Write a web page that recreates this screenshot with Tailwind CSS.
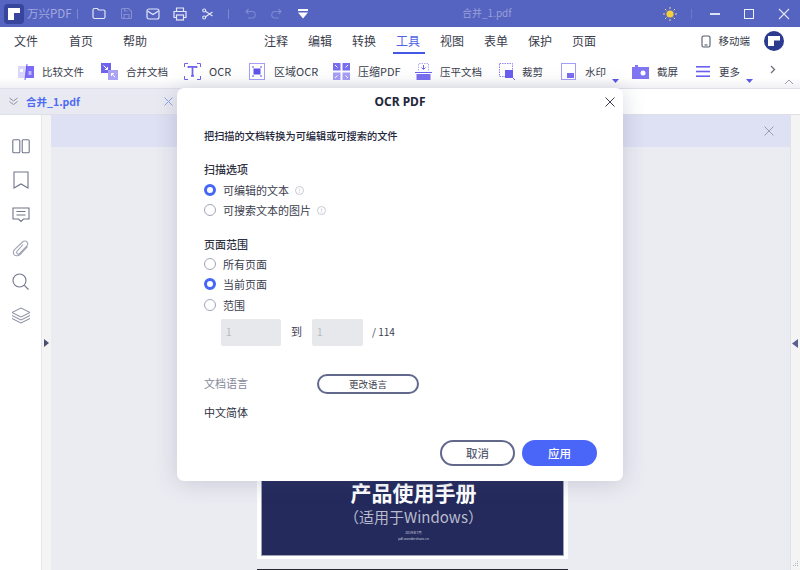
<!DOCTYPE html>
<html lang="zh-CN">
  <head>
    <meta charset="UTF-8" />
    <title>万兴PDF</title>
    <script src="https://cdn.jsdelivr.net/npm/@tailwindcss/browser@4"></script>
  </head>
  <body class="bg-white">
    <div class="relative w-[800px] h-[570px] overflow-hidden flex flex-col bg-white font-['Noto_Sans_CJK_SC','Noto_Sans',sans-serif] text-[#3a3d4d]">

      <!-- Title bar -->
      <div class="h-[27px] shrink-0 bg-[#5563c1] flex items-center relative text-[#a3aade]">
        <div class="ml-[4px] w-[20px] h-[20px] rounded-[4px] bg-[#38459c] flex items-center justify-center">
          <svg width="14" height="14" viewBox="0 0 14 14"><path d="M1 1h12v5H7v7H1z" fill="#fff"/></svg>
        </div>
        <span class="ml-[3px] w-[46px] text-[11.500px] leading-none whitespace-nowrap">万兴PDF</span>
        <div class="ml-[4px] w-px h-[10px] bg-[#7d88cf]"></div>
        <svg class="ml-[14px]" width="14" height="13" viewBox="0 0 14 13" fill="none" stroke="#e4e7f7" stroke-width="1.2"><path d="M1 3a1.500 1.500 0 0 1 1.500-1.500h2.800l1.500 1.500h4.700a1.500 1.500 0 0 1 1.500 1.500v5.500a1.500 1.500 0 0 1-1.500 1.500h-9A1.500 1.500 0 0 1 1 10z"/></svg>
        <svg class="ml-[14px]" width="13" height="13" viewBox="0 0 13 13" fill="none" stroke="#8791d2" stroke-width="1.1"><path d="M1.500 2.500a1 1 0 0 1 1-1h6l3 3v6a1 1 0 0 1-1 1h-8a1 1 0 0 1-1-1zM4 11.500v-4h5v4M4.500 1.500v2.500h3"/></svg>
        <svg class="ml-[13px]" width="14" height="12" viewBox="0 0 14 12" fill="none" stroke="#e4e7f7" stroke-width="1.2"><rect x="1" y="1" width="12" height="10" rx="2"/><path d="M1.500 3l5.500 3.500L12.500 3"/></svg>
        <svg class="ml-[13px]" width="14" height="14" viewBox="0 0 14 14" fill="none" stroke="#e4e7f7" stroke-width="1.2"><path d="M3.500 4.500V1h7v3.500M3.500 10.500H1V4.500h12v6h-2.500"/><rect x="3.500" y="8" width="7" height="5"/></svg>
        <svg class="ml-[15px]" width="11" height="12" viewBox="0 0 11 12" fill="none" stroke="#e4e7f7" stroke-width="1.1"><circle cx="2.200" cy="2.500" r="1.500"/><circle cx="2.200" cy="9.500" r="1.500"/><path d="M3.500 3.300L10.500 8M3.500 8.700L10.500 4"/></svg>
        <div class="ml-[15px] w-px h-[10px] bg-[#7d88cf]"></div>
        <svg class="ml-[16px]" width="11" height="11" viewBox="0 0 11 11" fill="none" stroke="#7f8ad0" stroke-width="1.1"><path d="M3.500 1L1 3.500 3.500 6M1 3.500h6a3 3 0 0 1 0 6.500H3"/></svg>
        <svg class="ml-[15px]" width="11" height="11" viewBox="0 0 11 11" fill="none" stroke="#7f8ad0" stroke-width="1.100"><path d="M7.500 1L10 3.500 7.500 6M10 3.500H4a3 3 0 0 0 0 6.500h4"/></svg>
        <svg class="ml-[16px]" width="10" height="10" viewBox="0 0 10 10" fill="#fff"><rect y="0" width="10" height="2"/><path d="M0 3.500h10L5 9.500z"/></svg>
        <span class="absolute left-[462px] top-[5px] text-[10px] leading-[15px] text-[#98a0d8]">合并_1.pdf</span>
        <div class="ml-auto flex items-center">
          <svg width="14" height="14" viewBox="0 0 14 14"><circle cx="7" cy="7" r="3.600" fill="#f6cf3f"/><g stroke="#f0d88a" stroke-width="1"><path d="M7 0v2M7 12v2M0 7h2M12 7h2M2 2l1.400 1.400M10.600 10.600L12 12M2 12l1.400-1.400M10.600 3.400L12 2"/></g></svg>
          <div class="ml-[14px] w-px h-[10px] bg-[#6e79c6]"></div>
          <div class="ml-[18px] w-[10px] h-[2px] bg-[#dfe2f5]"></div>
          <div class="ml-[24px] w-[10px] h-[10px] border border-[#eef0fa]"></div>
          <svg class="ml-[24px] mr-[10px]" width="12" height="12" viewBox="0 0 12 12" stroke="#e4e7f7" stroke-width="1.1"><path d="M1 1l10 10M11 1L1 11"/></svg>
        </div>
      </div>

      <!-- Menu row -->
      <div class="h-[28px] shrink-0 flex items-center text-[12px] relative">
        <span class="ml-[14px] w-[55px]">文件</span>
        <span class="w-[54px]">首页</span>
        <span class="w-[141px]">帮助</span>
        <div class="flex gap-[20px]">
          <span>注释</span><span>编辑</span><span>转换</span>
          <span class="relative text-[#4e63e8]">工具<span class="absolute left-[-3px] right-[-5px] bottom-[-4px] h-[2px] bg-[#4359e6]"></span></span>
          <span>视图</span><span>表单</span><span>保护</span><span>页面</span>
        </div>
        <div class="ml-auto flex items-center">
          <svg width="10" height="13" viewBox="0 0 10 13" fill="none" stroke="#555a6b" stroke-width="1.100"><rect x="1" y="1" width="8" height="11" rx="1.500"/><path d="M3.500 10h3"/></svg>
          <span class="ml-[8px] text-[10.500px]">移动端</span>
          <div class="ml-[14px] mr-[16px] w-[20px] h-[20px] rounded-full bg-[#2c3a8f] flex items-center justify-center">
            <svg width="12" height="12" viewBox="0 0 12 12"><path d="M0 1h12v4.500H6V11H0z" fill="#fff"/></svg>
          </div>
        </div>
      </div>

      <!-- Tool row -->
      <div class="h-[33px] shrink-0 flex items-center pl-[17px] text-[10.500px] bg-gradient-to-b from-white from-70% to-[#f1f1f5] relative">
        <div class="w-[84px] flex items-center gap-[7px]">
          <svg width="18" height="18" viewBox="0 0 18 18"><rect x="1" y="3" width="8" height="12" fill="#d9d5fb"/><rect x="9" y="3" width="8" height="12" fill="#7c6cf5"/><path d="M10 1L8 17" stroke="#6a58ef" stroke-width="1"/><rect x="3" y="6" width="3" height="3" fill="#fff"/><path d="M11.500 9h3M11.500 11h3" stroke="#fff"/></svg>
          <span>比较文件</span>
        </div>
        <div class="w-[83px] flex items-center gap-[8px]">
          <svg width="17" height="17" viewBox="0 0 17 17"><rect x="0" y="0" width="10" height="10" fill="#6f63ee"/><rect x="7" y="7" width="10" height="10" fill="#a9a2f6"/><path d="M2.500 2.500l4 4M6.500 4v2.500H4" stroke="#fff" fill="none"/><path d="M14 14l-3.500-3.500M10.500 13v-2.500H13" stroke="#fff" fill="none"/></svg>
          <span>合并文档</span>
        </div>
        <div class="w-[65px] flex items-center gap-[8px]">
          <svg width="17" height="17" viewBox="0 0 17 17" fill="none" stroke="#6e62f0" stroke-width="1"><path d="M0.500 4V0.500H4M13 0.500h3.500V4M16.500 13v3.500H13M4 16.500H0.500V13"/><path d="M4.500 5V3.800h8V5M8.500 3.800v9M7 12.800h3" stroke-width="1.700"/></svg>
          <span class="text-[11px]">OCR</span>
        </div>
        <div class="w-[84px] flex items-center gap-[9px]">
          <svg width="16" height="17" viewBox="0 0 16 17" fill="none"><rect x="0.500" y="0.500" width="15" height="16" stroke="#a59ef6"/><rect x="4.500" y="5.500" width="7" height="6" fill="#5f53ea"/><path d="M3 4h2M11 4h2M3 13h2M11 13h2" stroke="#5f53ea"/></svg>
          <span class="text-[11px]">区域OCR</span>
        </div>
        <div class="w-[82px] flex items-center gap-[8px]">
          <svg width="17" height="17" viewBox="0 0 17 17"><rect width="7.500" height="7.500" fill="#7a6ef0"/><rect x="9.500" width="7.500" height="7.500" fill="#7a6ef0"/><rect y="9.500" width="7.500" height="7.500" fill="#a69ff6"/><rect x="9.500" y="9.500" width="7.500" height="7.500" fill="#a69ff6"/><path d="M2 2l2.500 2.500M15 2l-2.500 2.500M2 15l2.500-2.500M15 15l-2.500-2.500" stroke="#fff"/></svg>
          <span class="text-[11px]">压缩PDF</span>
        </div>
        <div class="w-[84px] flex items-center gap-[8px]">
          <svg width="17" height="17" viewBox="0 0 17 17" fill="none"><path d="M3.500 7.500V0.500h10v7" stroke="#b1acf5" stroke-dasharray="1.500 1"/><path d="M8.500 2v4M6.500 4.500l2 2 2-2" stroke="#6e62f0"/><path d="M0 9.500h17" stroke="#6e62f0"/><rect x="1.500" y="11" width="14" height="6" fill="#7a6ef0"/></svg>
          <span>压平文档</span>
        </div>
        <div class="w-[62px] flex items-center gap-[7px]">
          <svg width="16" height="17" viewBox="0 0 16 17" fill="none"><rect x="0.500" y="0.500" width="13" height="13" stroke="#8d83f3" stroke-dasharray="1.500 1"/><rect x="6" y="7" width="8" height="8" fill="#6a5eef"/><path d="M14 15l2 2" stroke="#6a5eef"/></svg>
          <span>裁剪</span>
        </div>
        <div class="w-[71px] flex items-center gap-[6px] relative">
          <svg width="18" height="18" viewBox="0 0 18 18" fill="none"><rect x="0.500" y="0.500" width="14" height="16" stroke="#a59ef6"/><rect x="6" y="10" width="7" height="5" fill="#7a6ef0"/></svg>
          <span>水印</span>
          <svg class="absolute left-[51px] top-[16px]" width="7" height="5" viewBox="0 0 7 5"><path d="M0 0h7L3.500 4z" fill="#5d58e6"/></svg>
        </div>
        <div class="w-[64px] flex items-center gap-[8px]">
          <svg width="17" height="16" viewBox="0 0 17 16"><path d="M0 3h3V1h3v2h11v12H0z" fill="#8176f2"/><circle cx="11" cy="9" r="2.500" fill="#fff"/></svg>
          <span>截屏</span>
        </div>
        <div class="flex items-center gap-[9px] relative">
          <svg width="14" height="11" viewBox="0 0 14 11" fill="#6b5ff0"><rect width="14" height="1.600"/><rect y="4.700" width="14" height="1.600"/><rect y="9.400" width="14" height="1.600"/></svg>
          <span>更多</span>
          <svg class="absolute left-[50px] top-[15px]" width="7" height="5" viewBox="0 0 7 5"><path d="M0 0h7L3.500 4z" fill="#5d58e6"/></svg>
        </div>
        <svg class="absolute left-[770px] top-[10px]" width="6" height="9" viewBox="0 0 6 9" fill="none" stroke="#6b6e7c" stroke-width="1.300"><path d="M1 1l3.500 3.500L1 8"/></svg>
        <svg class="absolute left-[784px] top-[24px]" width="10" height="6" viewBox="0 0 10 6" fill="none" stroke="#9a9cab"><path d="M1 5l4-4 4 4"/></svg>
      </div>

      <!-- Tab row -->
      <div class="h-[27px] shrink-0 flex border-t border-b border-[#dedfe8]">
        <div class="w-[180px] bg-[#e9eaf1] flex items-center">
          <svg class="ml-[9px]" width="9" height="9" viewBox="0 0 9 9" fill="none" stroke="#8e90a3"><path d="M0.500 1l4 3 4-3M0.500 4.500l4 3 4-3"/></svg>
          <span class="ml-[8px] w-[138px] text-[10.500px] font-bold text-[#4e6bf4]">合并_1.pdf</span>
          <svg width="9" height="9" viewBox="0 0 9 9" stroke="#8fa0ee"><path d="M0.500 0.500l8 8M8.500 0.500l-8 8"/></svg>
        </div>
        <div class="flex-1 bg-white"></div>
      </div>

      <!-- Work area -->
      <div class="flex-1 min-h-0 flex">
        <div class="w-[41px] shrink-0 bg-white flex flex-col items-center pt-[24px]">
          <svg width="18" height="15" viewBox="0 0 18 15" fill="none" stroke="#71758c" stroke-width="1.100"><rect x="0.800" y="0.800" width="7" height="13" rx="1"/><rect x="10.200" y="0.800" width="7" height="13" rx="1"/></svg>
          <svg class="mt-[17px]" width="16" height="18" viewBox="0 0 16 18" fill="none" stroke="#71758c" stroke-width="1.100"><path d="M1 1h14v16l-7-4-7 4z"/></svg>
          <svg class="mt-[18px]" width="18" height="16" viewBox="0 0 18 16" fill="none" stroke="#71758c" stroke-width="1.100"><path d="M1 1h16v11h-5.500L9 14.500 6.500 12H1zM4.500 4.500h9M4.500 8h9"/></svg>
          <svg class="mt-[17px]" width="18" height="17" viewBox="0 0 18 17" fill="none" stroke="#a1a4b5" stroke-width="1.100"><path d="M15.500 6.500l-7.500 8c-2 2-6 1.500-6.500-1-.4-1.500 0-2.700 1-3.800L10.500 2c1.500-1.500 3.500-1.300 4.500-.2 1 1.200 1 2.800-.3 4.200l-7 7.300c-1 1-2.300.8-2.800 0-.5-.7-.3-1.700.5-2.500L11 4.500"/></svg>
          <svg class="mt-[16px]" width="17" height="17" viewBox="0 0 17 17" fill="none" stroke="#71758c" stroke-width="1.100"><circle cx="7.500" cy="7.500" r="6.500"/><path d="M12.300 12.300L16.500 16.500"/></svg>
          <svg class="mt-[17px]" width="20" height="17" viewBox="0 0 20 17" fill="none" stroke="#81859a" stroke-width="1"><path d="M10 1l9 4.500-9 4.500-9-4.500zM1 8.500l9 4.500 9-4.500M1 11.500L10 16l9-4.500"/></svg>
        </div>
        <div class="w-[10px] shrink-0 bg-[#f4f4f5] border-l border-[#e6e6ea] relative">
          <svg class="absolute left-[2px] top-[224px]" width="5" height="8" viewBox="0 0 5 8"><path d="M0 0l5 4-5 4z" fill="#4c5070"/></svg>
        </div>
        <div class="flex-1 min-w-0 bg-[#ebecf2] flex flex-col">
          <div class="h-[32px] shrink-0 bg-[#dee0f3] flex items-center justify-end pr-[16px]">
            <svg width="10" height="10" viewBox="0 0 10 10" stroke="#9a9cb0"><path d="M0.500 0.500l9 9M9.500 0.500l-9 9"/></svg>
          </div>
          <!-- PDF pages, the first is cut off behind the dialog -->
          <div class="flex-1 min-h-0 overflow-hidden flex flex-col items-center justify-end">
            <div class="ml-[-17px] w-[311px] h-[300px] shrink-0 bg-white px-[4px] pb-[3px] flex flex-col">
              <div class="flex-1 bg-[#242a5c] border border-[#9fa3b8] flex flex-col items-center justify-end pl-[3px] pb-[13px] text-white">
                <span class="text-[21px] leading-[27px] font-bold">产品使用手册</span>
                <span class="text-[15px] leading-[22px] text-[#b9bccd]">（适用于Windows）</span>
                <span class="mt-[2px] text-[3.500px] leading-[6px] text-[#c5c8d8]">2019年7月</span>
                <span class="text-[3.500px] leading-[6px] text-[#c5c8d8] font-['Liberation_Sans',sans-serif]">pdf.wondershare.cn</span>
              </div>
            </div>
            <div class="ml-[-17px] mt-[10px] w-[311px] h-px shrink-0 bg-[#26262e]"></div>
          </div>
        </div>
        <div class="w-[10px] shrink-0 bg-[#f4f4f5] border-l border-[#e0e0e5] relative">
          <svg class="absolute left-[1px] top-[224px]" width="6" height="9" viewBox="0 0 6 9"><path d="M6 0L0 4.500 6 9z" fill="#5a6091"/></svg>
          <svg class="absolute left-[1px] bottom-[2px]" width="7" height="7" viewBox="0 0 7 7" fill="#b4b5bf"><rect x="5" y="0" width="1" height="1"/><rect x="3" y="2" width="1" height="1"/><rect x="5" y="2" width="1" height="1"/><rect x="1" y="4" width="1" height="1"/><rect x="3" y="4" width="1" height="1"/><rect x="5" y="4" width="1" height="1"/></svg>
        </div>
      </div>

      <!-- OCR dialog -->
      <div class="absolute left-[177px] top-[88px] w-[446px] h-[393px] bg-white rounded-[7px] shadow-[0_2px_22px_rgba(70,76,120,0.22)] pl-[27px] text-[11px] leading-[16px]">
        <div class="relative ml-[-27px] h-[28px] flex items-center justify-center text-[12px] font-bold text-[#23263a] font-['Noto_Sans',sans-serif]">
          OCR PDF
          <svg class="absolute right-[8px] top-[9px]" width="10" height="10" viewBox="0 0 10 10" stroke="#3c3f50"><path d="M0.500 0.500l9 9M9.500 0.500l-9 9"/></svg>
        </div>
        <p class="mt-[12px] text-[10.200px] font-medium text-[#23263a]">把扫描的文档转换为可编辑或可搜索的文件</p>
        <p class="mt-[17px] font-medium text-[#2f3243]">扫描选项</p>
        <div class="mt-[5px] flex items-center h-[16px]">
          <span class="w-[12px] h-[12px] rounded-full border-[3.500px] border-[#4666f6] bg-white"></span>
          <span class="ml-[7px] mb-[1px]">可编辑的文本</span>
          <span class="ml-[6px] w-[9px] h-[9px] rounded-full border border-[#c9cad3] text-[6px] leading-[7px] text-center text-[#a8aab6]">!</span>
        </div>
        <div class="mt-[4px] flex items-center h-[16px]">
          <span class="w-[12px] h-[12px] rounded-full border border-[#a3a5b8] bg-white"></span>
          <span class="ml-[7px] mb-[1px]">可搜索文本的图片</span>
          <span class="ml-[6px] w-[9px] h-[9px] rounded-full border border-[#c9cad3] text-[6px] leading-[7px] text-center text-[#a8aab6]">!</span>
        </div>
        <p class="mt-[18px] font-medium text-[#2f3243]">页面范围</p>
        <div class="mt-[4px] flex items-center h-[16px]">
          <span class="w-[12px] h-[12px] rounded-full border border-[#a3a5b8] bg-white"></span>
          <span class="ml-[7px] mb-[1px]">所有页面</span>
        </div>
        <div class="mt-[4px] flex items-center h-[16px]">
          <span class="w-[12px] h-[12px] rounded-full border-[3.500px] border-[#4666f6] bg-white"></span>
          <span class="ml-[7px] mb-[1px]">当前页面</span>
        </div>
        <div class="mt-[5px] flex items-center h-[16px]">
          <span class="w-[12px] h-[12px] rounded-full border border-[#a3a5b8] bg-white"></span>
          <span class="ml-[7px] mb-[1px]">范围</span>
        </div>
        <div class="mt-[6px] ml-[17px] flex items-center h-[27px]">
          <div class="w-[60px] h-[27px] bg-[#e7e8ec] rounded-[2px] pl-[5px] text-[10px] leading-[26px] text-[#b5b7c0]">1</div>
          <span class="ml-[10px] w-[21px] mb-[3px]">到</span>
          <div class="w-[51px] h-[27px] bg-[#e7e8ec] rounded-[2px] pl-[5px] text-[10px] leading-[26px] text-[#b5b7c0]">1</div>
          <span class="ml-[9px] mb-[2px] text-[10px]">/ 114</span>
        </div>
        <div class="mt-[28px] flex items-center h-[20px]">
          <span class="w-[113px] mb-[2px] text-[#85889a]">文档语言</span>
          <button class="w-[102px] h-[20px] rounded-full border-2 border-[#62688c] text-[9.500px] leading-[14px] text-[#3a3d4d]">更改语言</button>
        </div>
        <p class="mt-[10px] text-[#2f3243]">中文简体</p>
        <div class="mt-[20px] mr-[26px] flex justify-end gap-[7px] text-[11.500px] font-medium">
          <button class="w-[75px] h-[26px] rounded-full border-2 border-[#62688c] text-[#5b5f74]">取消</button>
          <button class="w-[75px] h-[26px] rounded-full bg-[#4a66f8] text-white">应用</button>
        </div>
      </div>
    </div>
  </body>
</html>
